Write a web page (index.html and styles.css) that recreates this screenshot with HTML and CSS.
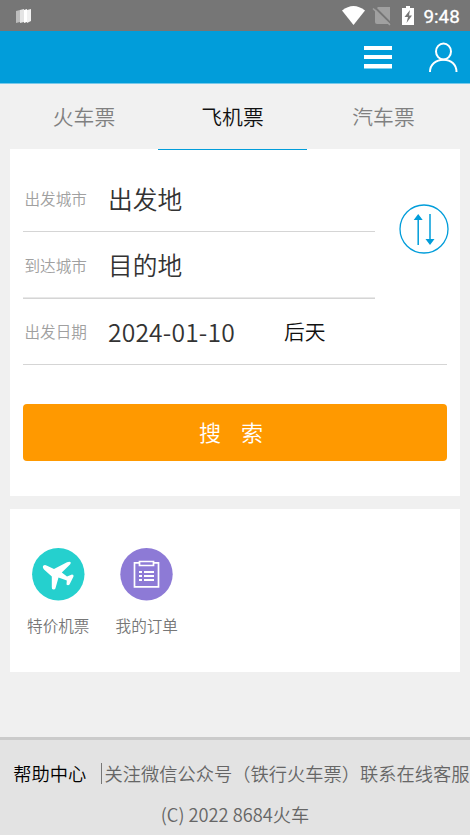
FILE: index.html
```html
<!DOCTYPE html>
<html lang="zh-CN">
<head>
<meta charset="utf-8">
<title>飞机票</title>
<link rel="stylesheet" href="styles.css">
</head>
<body>
<div class="status">
  <svg class="map" width="15" height="15" viewBox="0 0 15 15"><path fill="#bdbdbd" d="M0 2l4-1v12l-4 1z"/><path fill="#e4e4e4" d="M4 1l4-1v13l-4 1z"/><path fill="#fff" d="M8 1l3-1v13l-3 1z"/><path fill="#f1f1f1" d="M11 1l4-1v12l-4 2z"/></svg>
  <svg width="128" height="31" viewBox="0 0 128 31">
    <path fill="#fff" d="M0 10.500Q11.500 1.500 23 10.500L11.500 25z"/>
    <path fill="#a0a0a0" d="M36 7h12v17H35q-2 0-2-2V10z"/>
    <path stroke="#767676" stroke-width="2" d="M32.500 7l17 17"/>
    <path stroke="#a0a0a0" stroke-width="1.500" d="M31 8.500l17 16.500"/>
    <path fill="#fff" d="M60 8h4V6h4v2h4v17H60z"/>
    <path fill="#767676" d="M68 10l-5.500 7h3.500L64.500 23l5.500-7.500h-3z"/>
    <text class="clock" x="81.500" y="22.500">9:48</text>
  </svg>
</div>
<header class="bar">
  <svg width="28" height="23" viewBox="0 0 28 23" fill="#fff"><path d="M0 0h28v4H0zM0 9h28v4H0zM0 18h28v4.500H0z"/></svg>
  <svg width="30" height="32" viewBox="0 0 30 32" fill="none" stroke="#fff" stroke-width="2"><ellipse cx="15.500" cy="9.500" rx="7.500" ry="7.900"/><path d="M2 30C2 22.500 8 17.800 15.500 17.800S28.500 22.500 28.500 30"/></svg>
</header>
<nav class="tabs"><a>火车票</a><a class="on">飞机票</a><a>汽车票</a></nav>
<main class="form card">
  <div class="cities">
    <div class="fields">
      <div class="row"><label>出发城市</label><span class="value">出发地</span></div>
      <div class="row thick"><label>到达城市</label><span class="value">目的地</span></div>
    </div>
    <svg class="swap" width="50" height="50" viewBox="0 0 50 50"><circle cx="25" cy="25" r="24" fill="none" stroke="#019dda" stroke-width="1.300"/><path fill="none" stroke="#019dda" stroke-width="1.500" d="M19.200 14v27M31 10v27"/><path fill="#019dda" d="M14.700 16L19.200 10l4.500 6zM26.500 35L31 41l4.500-6z"/></svg>
  </div>
  <div class="row"><label>出发日期</label><span class="value date">2024-01-10</span><span class="day">后天</span></div>
  <button class="search"><span>搜</span><span>索</span></button>
</main>
<section class="links card">
  <a class="link">
    <svg width="53" height="53" viewBox="0 0 53 53"><circle cx="26.300" cy="26.300" r="26.200" fill="#25d0ce"/><path fill="#fff" d="M22 21L35 14.200Q38 13 38.800 14.500Q39 16 37 17.500L29.800 24.500L35 28.500L40 26.500Q42 26.500 41.500 28.500L37.500 36.500Q36 38 34.500 36.500L34.800 32.500L26.500 29.500L23.700 39.500Q23.300 42 21.500 41.500Q19.500 41.500 19.800 39L19.800 28.500L12 21.500Q10 19 11.500 17.500Q13 16.500 15 17.800z"/></svg>
    <span>特价机票</span>
  </a>
  <a class="link">
    <svg width="53" height="53" viewBox="0 0 53 53"><circle cx="26.500" cy="26.300" r="26.200" fill="#8d7ad6"/><path fill="none" stroke="#fff" stroke-width="1.700" d="M19 14.800h-4.500v24h24v-24H34M19.500 13.500h14v4h-14z"/><path stroke="#fff" stroke-width="2" d="M19 24H22M19 28H22M19 32H22M24 24h10M24 28h10M24 32h10"/></svg>
    <span>我的订单</span>
  </a>
</section>
<footer class="foot">
  <div class="help"><a>帮助中心</a><i></i><span>关注微信公众号（铁行火车票）联系在线客服</span></div>
  <div class="copy">(C) 2022 8684火车</div>
</footer>
</body>
</html>
```
FILE: styles.css
```css
* { box-sizing: border-box; }
body {
  margin: 0;
  width: 470px;
  height: 835px;
  overflow: hidden;
  display: flex;
  flex-direction: column;
  background: #f0f0f0;
  color: #333;
  font-family: "Noto Sans CJK SC", sans-serif;
  font-weight: 350;
}
.status {
  height: 31px;
  flex: none;
  background: #767676;
  display: flex;
  justify-content: space-between;
  padding-left: 16px;
}
.map { margin-top: 9px; }
.clock { font: 400 18.800px Roboto, sans-serif; fill: #fff; stroke: #fff; stroke-width: 0.300px; }
.bar {
  height: 53px;
  flex: none;
  background: #019dda;
  border-bottom: 1px solid #78c9ea;
  display: flex;
  justify-content: flex-end;
  align-items: center;
  gap: 36px;
  padding: 1px 12px 0 0;
}
.tabs {
  height: 66px;
  flex: none;
  margin: 0 10px;
  display: grid;
  grid-template-columns: 148px 149px 1fr;
  background: linear-gradient(#f1f1f1 65px, transparent 65px);
  font-size: 20.800px;
  line-height: 64px;
  text-align: center;
  color: #808080;
}
.tabs .on { color: #111; border-bottom: 1px solid #019dda; }
.card { background: #fff; margin: 0 10px; flex: none; }
.form { height: 347px; margin-top: -1px; padding: 16.500px 13px 0; position: relative; z-index: -1; }
.cities { display: flex; justify-content: space-between; }
.fields { width: 352px; }
.row {
  height: 66.500px;
  display: flex;
  align-items: center;
  border-bottom: 1px solid #d5d5d5;
}
.row.thick { box-shadow: 0 -1px #e8e8e8 inset; }
.row label { width: 85px; padding-left: 1.500px; font-size: 15.600px; color: #a0a0a0; }
.value { font-size: 24.700px; line-height: 36px; padding-bottom: 1px; }
.date { letter-spacing: 0.150px; }
.day { margin-left: 49px; font-size: 20.800px; color: #111; }
.swap { margin: 38.500px -1.500px 0 0; }
.search {
  display: flex;
  justify-content: center;
  align-items: center;
  gap: 20px;
  width: 100%;
  height: 56.500px;
  margin: 39px 0 0;
  padding: 0 8px 2px 0;
  border: 0;
  border-radius: 4px;
  background: #ff9900;
  color: #fff;
  font: 350 22.100px "Noto Sans CJK SC", sans-serif;
}
.links { height: 163px; margin-top: 13px; padding: 39px 4px 0; display: flex; }
.link {
  width: 88.500px;
  display: flex;
  flex-direction: column;
  align-items: center;
  gap: 13px;
  font-size: 15.600px;
  line-height: 23px;
  color: #777;
}
.foot {
  margin-top: auto;
  height: 98px;
  flex: none;
  border-top: 3px solid #cbcbcb;
  background: #e3e3e3;
  color: #666;
  font-size: 18.250px;
  line-height: 41px;
  padding-top: 13px;
}
.help { display: flex; align-items: center; white-space: nowrap; padding-left: 13.300px; }
.help a { color: #000; }
.help i { width: 1px; height: 21px; background: #777; margin: 0 2.800px 0 14.500px; }
.copy { text-align: center; }
```
